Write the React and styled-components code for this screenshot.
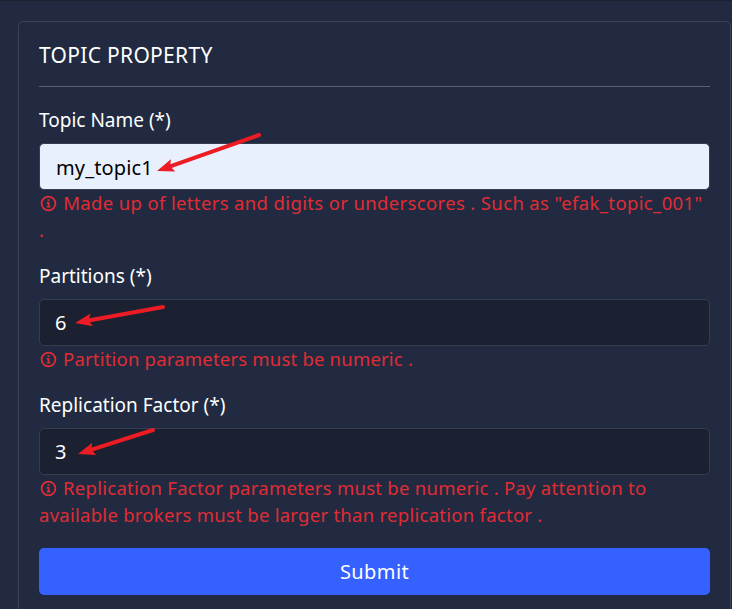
import React from 'react'
import styled, { createGlobalStyle } from 'styled-components'

const App = () => {
  return (
    <Page>
      <GlobalStyle />
      <Card>
        <Title>TOPIC PROPERTY</Title>
        <Divider />
        <Form onSubmit={(e) => e.preventDefault()}>
          <Field>
            <Label htmlFor="topic">Topic Name (*)</Label>
            <Input id="topic" defaultValue="my_topic1" $filled />
            <Help $spacing="0.36px">
              <InfoIcon /> Made up of letters and digits or underscores . Such as "efak_topic_001" .
            </Help>
          </Field>

          <Field>
            <Label htmlFor="partitions">Partitions (*)</Label>
            <Input id="partitions" defaultValue="6" />
            <Help $spacing="0.2px">
              <InfoIcon /> Partition parameters must be numeric .
            </Help>
          </Field>

          <Field>
            <Label htmlFor="replication">Replication Factor (*)</Label>
            <Input id="replication" defaultValue="3" />
            <Help $spacing="0.27px">
              <InfoIcon /> Replication Factor parameters must be numeric . Pay attention to available brokers must be larger than replication factor .
            </Help>
          </Field>

          <Submit type="submit">Submit</Submit>
        </Form>
      </Card>

      <Arrows viewBox="0 0 732 609">
        <Arrow from={[259, 135]} to={[157, 171]} />
        <Arrow from={[163, 307]} to={[75, 323]} />
        <Arrow from={[153, 430]} to={[78, 454]} />
      </Arrows>
    </Page>
  )
}

const InfoIcon = () => (
  <Icon viewBox="0 0 17 17">
    <circle cx="8.5" cy="8.5" r="6.9" fill="none" stroke="currentColor" strokeWidth="1.8" />
    <path d="M7.5 4.2h2v1.9h-2zM6.7 7.1h2.8v4.1h.9v1.4H6.7v-1.4h.9V8.5h-.9z" fill="currentColor" />
  </Icon>
)

// Shaft with a barbed head, the tip sits exactly on `to`
const Arrow = ({ from, to }) => {
  const dx = to[0] - from[0]
  const dy = to[1] - from[1]
  const length = Math.hypot(dx, dy)
  const angle = (Math.atan2(dy, dx) * 180) / Math.PI

  return (
    <g transform={`translate(${to[0]} ${to[1]}) rotate(${angle})`}>
      <line x1={-length} y1="0" x2="-11" y2="0" stroke="#ed1c24" strokeWidth="4" strokeLinecap="round" />
      <path d="M0 0L-17 6.5L-14 0L-17 -6.5Z" fill="#ed1c24" />
    </g>
  )
}

const GlobalStyle = createGlobalStyle`
  * {
    box-sizing: border-box;
  }

  body {
    margin: 0;
    background: #212a40;
    font-family: 'Noto Sans', 'Open Sans', sans-serif;
    color: #fff;
  }
`

const Page = styled.main`
  position: relative;
  height: 609px;
  overflow: hidden;
  border-top: 1px solid #1b2130;
  padding: 20px 1px 0 18px;
`

const Card = styled.section`
  height: 640px;
  padding: 21px 20px 0;
  background: #212a40;
  border: 1px solid #3a4356;
  border-radius: 5px;
`

const Title = styled.h6`
  margin: 0;
  font-size: 21px;
  font-weight: 400;
  line-height: 24px;
  letter-spacing: 0.3px;
`

const Divider = styled.hr`
  height: 1px;
  margin: 19px 0 20px;
  border: 0;
  background: #596070;
`

const Form = styled.form`
  display: flex;
  flex-direction: column;
  gap: 19px;
`

const Field = styled.div`
  display: flex;
  flex-direction: column;
`

const Label = styled.label`
  margin-bottom: 9px;
  font-size: 19px;
  line-height: 27px;
`

const Input = styled.input`
  height: 47px;
  padding: ${(p) => (p.$filled ? '2px 15px 0 16px' : '0 15px')};
  border: 1px solid #353e4e;
  border-radius: 5px;
  outline: none;
  background: ${(p) => (p.$filled ? '#e8f0fe' : '#1b2130')};
  color: ${(p) => (p.$filled ? '#000' : '#fff')};
  font-family: inherit;
  font-size: 20px;
  letter-spacing: 0.15px;
`

const Help = styled.span`
  margin: -1px 0 1px;
  color: #e02c34;
  font-size: 18.5px;
  line-height: 27px;
  letter-spacing: ${(p) => p.$spacing};
`

const Icon = styled.svg`
  width: 17px;
  height: 17px;
  margin: 0 1px;
  vertical-align: -2px;
`

const Submit = styled.button`
  height: 47px;
  padding: 0;
  border: 0;
  border-radius: 5px;
  background: #3461ff;
  color: #fff;
  font-family: inherit;
  font-size: 20px;
  letter-spacing: 0.4px;
`

// Annotations lie over the form
const Arrows = styled.svg`
  position: absolute;
  top: -1px;
  left: 0;
  width: 732px;
  height: 609px;
  pointer-events: none;
`

export default App
